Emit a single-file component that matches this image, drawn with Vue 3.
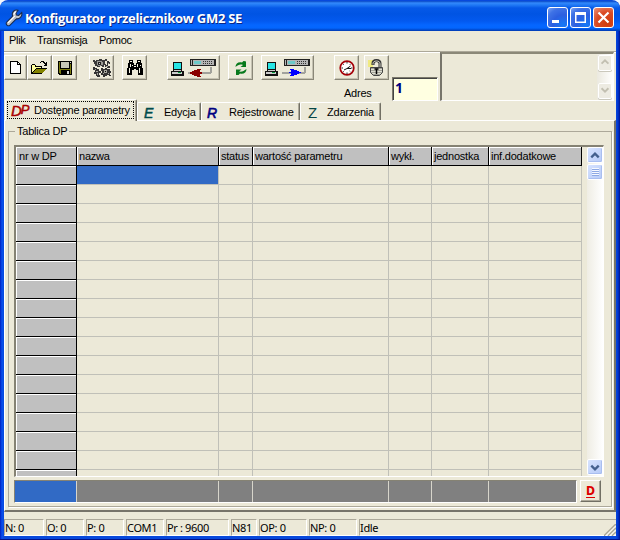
<script setup>
const menus = [
  { t: 'Plik', w: 28 },
  { t: 'Transmisja', w: 62 },
  { t: 'Pomoc', w: 50 }
]
const columns = [
  { t: 'nr w DP', k: 'c0' },
  { t: 'nazwa', k: 'c1' },
  { t: 'status', k: 'c2' },
  { t: 'wartość parametru', k: 'c3' },
  { t: 'wykł.', k: 'c4' },
  { t: 'jednostka', k: 'c5' },
  { t: 'inf.dodatkowe', k: 'c6' }
]
const rows = 17
const status = [
  { t: 'N: 0', w: 40 },
  { t: 'O: 0', w: 38 },
  { t: 'P: 0', w: 38 },
  { t: 'COM1', w: 38 },
  { t: 'Pr : 9600', w: 63 },
  { t: 'N81', w: 26 },
  { t: 'OP: 0', w: 48 },
  { t: 'NP: 0', w: 48 }
]
</script>

<template>
  <div class="window">
    <header class="titlebar">
      <svg class="wrench" width="18" height="18" viewBox="0 0 18 18">
        <path d="M3.500 14.500 10 8" stroke="#14284f" stroke-width="5.400" stroke-linecap="round" />
        <path d="M13 1.200c-3.500-1-6.500 2-5.500 5.300 1 3.500 5.500 4.500 8 1.800 1.300-1.300 1.700-3 1.200-4.800l-3 3-2.300-.4-.4-2.300z" fill="#c3c6cc" stroke="#1c2c49" stroke-width="1.100" />
        <path d="M3.500 14.500 10 8" stroke="#b4b8c0" stroke-width="3.400" stroke-linecap="round" />
        <path d="M3 13.800 10 6.800M9 5.500c.2-1.500 1-2.500 2.300-3" stroke="#fff" stroke-width="1.200" />
      </svg>
      <h1>Konfigurator przelicznikow GM2 SE</h1>
      <div class="controls">
        <button class="ctl"><svg viewBox="0 0 21 21"><path d="M5 13h7v3H5z" fill="#fff" /></svg></button>
        <button class="ctl"><svg viewBox="0 0 21 21"><path d="M5 5h11v11H5zM6.500 8v6.500h8V8z" fill="#fff" fill-rule="evenodd" /></svg></button>
        <button class="ctl close"><svg viewBox="0 0 21 21"><path d="m5.500 5.500 10 10m0-10-10 10" stroke="#fff" stroke-width="2.200" /></svg></button>
      </div>
    </header>

    <div class="client">
      <nav class="menu">
        <span v-for="m in menus" :key="m.t" :style="{ width: m.w + 'px' }">{{ m.t }}</span>
      </nav>

      <section class="toolbar">
        <div class="buttons">
          <button class="tool t-new">
            <svg width="11" height="13" viewBox="0 0 11 13" shape-rendering="crispEdges">
              <path d="M0 0h8v1h1v1h1v1h1v10H0z" fill="#000" /><path d="M1 1h6v3h3v8H1zM8 2h1v1H8z" fill="#fff" />
            </svg>
          </button>
          <button class="tool">
            <svg width="17" height="14" viewBox="0 0 17 14" shape-rendering="crispEdges">
              <path d="M1 4h4l1 1h5v3H5l-4 5z" fill="#ffff9c" />
              <path d="M1 3h3v1h1v1h6v3h-1V6H4V4H1v8H0V4h1zM5 7h11v1h-1v1h-1v1h-1v1h-1v1h-1v1H0v-1h1v-1h1v-1h1V9h1V8h1z" fill="#000" />
              <path d="M5 8h10l-4 4H2z" fill="#848400" />
              <path d="M9 1h1V0h3v1h1v1h1V1h1v4h-3V4h1V3h-1V2h-1V1h-2v1H9z" fill="#000" />
            </svg>
          </button>
          <button class="tool">
            <svg width="14" height="14" viewBox="0 0 14 14" shape-rendering="crispEdges">
              <path d="M0 0h14v14H1l-1-1z" fill="#000" /><path d="M1 1h1v7h10V3h1v10h-1V9H3v4H2l-1-1z" fill="#7b7b10" />
              <path d="M3 1h8v6H3z" fill="#c6c6b8" /><path d="M12 1h1v1h-1zM9 10h2v3H9z" fill="#ddd" />
            </svg>
          </button>
          <button class="tool t-gears">
            <svg width="18" height="18" viewBox="0 0 18 18" shape-rendering="crispEdges">
              <path d="M0 1h2v1h1V1h3V0h3v1h3V0h2v2h-2v3h1v1h-2v2H9V7H7v1H4V7H2V5H1V3H0z" fill="#3a3a3a" /><path d="M4 2h5v1h1v3H8v1H5V6H4z" fill="#9a9a94" /><path d="M5 3h3v3H5z" fill="#222" /><path d="M6 4h1v1H6z" fill="#ccc" />
              <path d="M14 2h2v1h1v2h-2v2h2v2h-3V8h-2V6h2zM0 8h2v1h2v1h2v2h2v2H6v2h1v2H4v-1H3v-2H1v-2h1v-2H0zM8 9h2v1h2V9h2v1h3v2h1v2h-1v2h-3v1h-2v1h-2v-2H8v-2h1v-2H8zM16 16h2v1h-2z" fill="#333" />
              <path d="M11 11h3v3h-3zM2 10h1v1H2zM3 12h2v1H3zM4 14h1v2H4zM15 4h1v1h-1zM13 7h2v1h-2zM10 14h1v1h-1zM15 14h1v1h-1z" fill="#a6a69e" /><path d="M12 12h1v1h-1z" fill="#000" />
            </svg>
          </button>
          <button class="tool t-find">
            <svg width="16" height="16" viewBox="0 0 16 16" shape-rendering="crispEdges">
              <path d="M2 0h4v3h1v2h2V3h1V0h4v3h1v5h1v7h-5v-5H9V9H7v1H5v5H0V8h1V3h1z" fill="#000" />
              <path d="M3 1h2v1H3zM11 1h2v1h-2zM3 4h1v3H3zM10 4h1v3h-1zM2 8h1v5H2zM12 8h1v5h-1zM7 6h2v1H7zM5 5h1v1H5zM13 5h1v1h-1z" fill="#f4f2e4" />
            </svg>
          </button>
          <button class="tool wide t-read">
            <svg width="45" height="18" viewBox="0 0 45 18" shape-rendering="crispEdges">
              <path d="M2 3h9v9H2zM0 12h13v5H0z" fill="#111" /><path d="M3 4h7v6H3z" fill="#27e5e5" /><path d="M3 11h7v1H3zM1 13h10v2H1z" fill="#ccc" /><path d="M7 13h3v1H7z" fill="#009c3a" />
              <path d="M19 0h26v7H19z" fill="#222" /><path d="M20 1h1v5h-1zM22 1h21v5H22zM44 1h0v5h0z" fill="#b4b4b4" /><path d="M23 2h7v3h-7z" fill="#6cc9c9" /><path d="M32 2h1v1h-1zM34 2h1v1h-1zM36 2h1v1h-1zM38 2h1v1h-1zM40 2h1v1h-1zM32 4h1v1h-1zM34 4h1v1h-1zM36 4h1v1h-1zM38 4h1v1h-1zM40 4h1v1h-1z" fill="#333" />
              <path d="M17 13h22V8h2v6h-1v1H17z" fill="#a2a29c" /><path d="M19 13h2v-1h2v-1h3v-1h4v1h-1v2h2v2h-2v2h1v1h-4v-1h-3v-1h-2v-1h-2z" fill="#8b0000" />
            </svg>
          </button>
          <button class="tool t-refresh">
            <svg width="12" height="14" viewBox="0 0 12 14">
              <path d="M.5 6C.5 2.500 3.500.5 7 1.500L8.500 0h.5l2 .5v5.500H5.500L8 4C5 3 3 4 .5 6zM11.500 8c0 3.500-3 5.500-6.500 4.500L3.500 14H1V8.500h5.500L4 10.500c3 .5 5-.5 7.500-2.500z" fill="#08791c" />
            </svg>
          </button>
          <button class="tool wide t-send">
            <svg width="45" height="18" viewBox="0 0 45 18" shape-rendering="crispEdges">
              <path d="M2 3h9v9H2zM0 12h13v5H0z" fill="#111" /><path d="M3 4h7v6H3z" fill="#27e5e5" /><path d="M3 11h7v1H3zM1 13h10v2H1z" fill="#ccc" /><path d="M7 13h3v1H7z" fill="#009c3a" />
              <path d="M19 0h26v7H19z" fill="#222" /><path d="M20 1h1v5h-1zM22 1h21v5H22z" fill="#b4b4b4" /><path d="M23 2h7v3h-7z" fill="#6cc9c9" /><path d="M32 2h1v1h-1zM34 2h1v1h-1zM36 2h1v1h-1zM38 2h1v1h-1zM40 2h1v1h-1zM32 4h1v1h-1zM34 4h1v1h-1zM36 4h1v1h-1zM38 4h1v1h-1zM40 4h1v1h-1z" fill="#333" />
              <path d="M17 13h22V8h2v6h-1v1H17z" fill="#a2a29c" /><path d="M25 10h4v1h3v1h2v1h2v1h-2v1h-2v1h-3v1h-4v-1h1v-2h-2v-1h2v-2h-1z" fill="#0000ff" />
            </svg>
          </button>
          <button class="tool t-clock">
            <svg width="16" height="16" viewBox="0 0 16 16">
              <circle cx="8" cy="8" r="6.800" fill="#fff" stroke="#a40008" stroke-width="1.700" />
              <path d="M8 2v1.500M8 12.500V14M2.500 8H4M12 8h1.500M4.300 4.300l.7.700M11.300 4.300l-.7.700M4.300 11.700l.7-.7M11.300 11.700l-.7-.7" stroke="#222" /><path d="M5 10 8 8.500l3.500-2.500M8 8.500h4" fill="none" stroke="#111" stroke-width="1" />
            </svg>
          </button>
          <button class="tool t-lock">
            <svg width="17" height="17" viewBox="0 0 17 17">
              <path d="M0 1h5v7H0z" fill="#f0ea80" />
              <path d="M5 6V4.500c0-4 7-4 7 0V9" stroke="#333" stroke-width="3" /><path d="M5 5.500v-1c0-3.300 7-3.300 7 0V9" stroke="#d5d5c8" />
              <path d="M2.500 8.500h12v5l-3 3h-6l-3-3z" fill="#a2a298" stroke="#444" /><path d="M3 10.500h11M3 12.500h11M4 14.500h9" stroke="#deded2" /><path d="M6.500 10h4M8.500 10v5" stroke="#000" stroke-width="1.500" />
            </svg>
          </button>
        </div>
        <label class="adres">Adres</label>
        <div class="address">1</div>
        <div class="memo">
          <div class="mbar">
            <i><svg viewBox="0 0 14 15"><path d="m3 9 4-4 4 4" /></svg></i>
            <i><svg viewBox="0 0 14 15"><path d="m3 5 4 4 4-4" /></svg></i>
          </div>
        </div>
      </section>

      <div class="tabs">
        <div class="tab active"><div class="focus"><b class="dp">D<em>P</em></b><span class="l1">Dostępne parametry</span></div></div>
        <div class="tab t2"><b class="e">E</b><span>Edycja</span></div>
        <div class="tab t3"><b class="r">R</b><span>Rejestrowane</span></div>
        <div class="tab t4"><b class="z">Z</b><span>Zdarzenia</span></div>
      </div>

      <main class="page">
        <fieldset>
          <legend>Tablica DP</legend>
          <div class="grid">
            <div class="cells">
              <div class="row head"><div v-for="c in columns" :key="c.k" :class="c.k"><span>{{ c.t }}</span></div></div>
              <div v-for="r in rows" :key="r" class="row">
                <div v-for="(c, i) in columns" :key="c.k" :class="[c.k, { fixed: i === 0, picked: r === 1 && i === 1 }]"></div>
              </div>
            </div>
            <div class="scroll">
              <i class="sb"><svg viewBox="0 0 15 16"><path d="m3.500 10 4-4 4 4" /></svg></i>
              <i class="thumb"></i>
              <i class="sb down"><svg viewBox="0 0 15 16"><path d="m3.500 6 4 4 4-4" /></svg></i>
            </div>
          </div>
          <div class="footer">
            <div class="summary"><div v-for="c in columns" :key="c.k" :class="c.k"></div></div>
            <button class="dbtn">D</button>
          </div>
        </fieldset>
      </main>

      <footer class="statusbar">
        <div v-for="s in status" :key="s.t" class="panel" :style="{ width: s.w + 'px' }">{{ s.t }}</div>
        <div class="panel last">Idle
          <svg class="grip" width="12" height="12" viewBox="0 0 12 12"><path d="M0 12 12 0M4 12l8-8M8 12l4-4" stroke="#aaa797" stroke-width="1.600" /><path d="M1.500 12 12 1.500M5.500 12 12 5.500M9.500 12 12 9.500" stroke="#fff" /></svg>
        </div>
      </footer>
    </div>
  </div>
</template>

<style>
body { margin: 0; background: #f4f8fd; overflow: hidden; }
</style>

<style scoped>
* { box-sizing: border-box; }
button { padding: 0; border: 0; font: inherit; display: block; }
svg { display: block; fill: none; }
.window { width: 620px; height: 540px; padding: 1px 4px 4px; background: linear-gradient(90deg, #001ec0, #0a50ee 2px, #0849dc 4px, #0849dc 616px, #0034cf 618px, #00138c); border-bottom: 1px solid #00138c; border-radius: 8px 8px 0 0; font: 11px/13px "Liberation Sans", Arial, sans-serif; letter-spacing: -.22px; color: #000; white-space: nowrap; }
.titlebar { height: 30px; margin: 0 -4px; padding: 0 6px 0 5px; display: flex; align-items: center; border-radius: 7px 7px 0 0; background: linear-gradient(#0847c5 0, #3389fb 2px, #2079f5 4px, #0659e8 7px, #0054e3 13px, #0359ef 20px, #0566ff 24px, #0366fe 27px, #0048cb 29px, #0038b0); }
h1 { margin: 3px 0 0 2px; flex: 1; font: bold 13px/18px "Open Sans", "Noto Sans", sans-serif; color: #fff; text-shadow: 1px 1px #0a2785; letter-spacing: -.27px; }
.wrench { margin-top: 3px; }
.controls { display: flex; gap: 2px; padding-top: 3px; }
.ctl { width: 21px; height: 21px; border: 1px solid #fff; border-radius: 3px; background: radial-gradient(circle at 80% 90%, #1479f7, #2c5fe0 45%, #3f73e6 75%, #7da4f4); }
.ctl svg { margin: -1px; width: 21px; height: 21px; }
.close { background: radial-gradient(circle at 70% 80%, #cf3b0c, #da4b25 55%, #eb937a); }
.client { height: 505px; background: #ece9d8; display: flex; flex-direction: column; }
.menu { height: 20px; padding: 3px 0 0 5px; display: flex; letter-spacing: -.3px; }
.toolbar { height: 49px; border-top: 1px solid #aca899; display: flex; box-shadow: inset 0 1px #fff; }
.buttons { display: flex; padding-top: 3px; width: 340px; }
.tool { width: 25px; height: 25px; flex: none; display: flex; align-items: center; justify-content: center; background: #ece9d8; border: 1px solid; border-color: #fff #8a8778 #8a8778 #fff; box-shadow: inset -1px -1px #c5c2b2; }
.t-new { width: 23px; }
.wide { width: 53px; }
.t-gears { margin-left: 12px; }
.t-find, .t-refresh, .t-send { margin-left: 8px; }
.t-read, .t-clock { margin-left: 20px; }
.t-lock { margin-left: 5px; }
.adres { width: 28px; margin: 35px 20px 0 0; position: relative; z-index: 1; }
.address { width: 46px; height: 24px; margin-top: 25px; padding: 2px; background: #ffffe1; border: 1px solid; border-color: #7c796b #fff #fff #7c796b; box-shadow: inset 1px 1px #444; font: bold 14px/16px "Open Sans", sans-serif; color: #000080; }
.memo { width: 174px; height: 49px; margin-left: 2px; border: 2px solid; border-color: #8b8878 #fff #fff #77756a; border-bottom-width: 1px; border-right-width: 1px; display: flex; justify-content: flex-end; }
.mbar { width: 16px; display: flex; flex-direction: column; justify-content: space-between; background: linear-gradient(90deg, #ebe9df, #fff); }
.mbar i { height: 16px; margin: 1px; border: 1px solid #fff; border-radius: 2px; background: #edebe2; box-shadow: 0 1px #cac8bc; }
.mbar path { stroke: #c2bfb1; stroke-width: 2.200; }

.tabs { height: 20px; display: flex; align-items: flex-end; }
.tab { height: 18px; display: flex; align-items: center; padding-top: 2px; border-top: 1px solid #fff; border-left: 1px solid #fff; border-right: 1px solid #716f64; box-shadow: inset -1px 0 #aca899; border-radius: 2px 2px 0 0; }
.active { width: 132px; height: 22px; margin: 0 0 -1px 1px; padding: 1px; align-items: flex-start; background: #ece9d8; position: relative; z-index: 2; }
.focus { width: 127px; height: 18px; border: 1px dotted #000; display: flex; align-items: center; padding-left: 3px; }
.tab b { font: italic bold 14px/16px "Liberation Sans", sans-serif; }
.tab .dp { color: #a80000; width: 23px; font-weight: normal; font-size: 15px; -webkit-text-stroke: .5px #a80000; letter-spacing: -1px; }
.dp em { font-size: 13px; vertical-align: 2px; }
.tab .e { width: 20px; color: #004b4b; font-weight: normal; -webkit-text-stroke: .5px #004b4b; }
.tab .r { width: 22px; color: #000080; font-weight: normal; -webkit-text-stroke: .6px #000080; }
.tab .z { width: 19px; color: #064545; font-weight: normal; font-style: normal; font-size: 15px; }
.t2 { width: 64px; padding-left: 6px; }
.t3 { width: 99px; padding-left: 5px; }
.t4 { width: 81px; padding-left: 7px; }
.page { height: 392px; border: solid; border-width: 1px 2px 2px 1px; border-color: #fff #77746a #77746a #fff; padding: 4px 2px 0 3px; }
fieldset { min-width: 0; margin: 0; height: 382px; padding: 0 0 0 5px; border: 1px solid #aca899; box-shadow: 1px 1px #fff; }
legend { height: 13px; margin-left: 1px; padding: 0 2px; }
.grid { width: 590px; height: 332px; margin-top: 7px; border: solid; border-width: 2px 1px 1px 2px; border-color: #858273 #fff #fff #858273; display: flex; justify-content: space-between; }
.cells { height: 329px; overflow: hidden; }
.row { height: 19px; display: flex; }
.row > div { height: 19px; border-right: 1px solid #c0c0b8; border-bottom: 1px solid #c0c0b8; }
.head > div, .row > .fixed { background: #c0c0c0; border-color: #000; box-shadow: inset 1px 1px #fff; }
.head > div { padding: 3px 0 0 2px; }
.head > .c0 { padding-left: 3px; }
.row > .picked { background: #316ac5; }
.c0 { width: 61px; } .c1 { width: 142px; } .c2 { width: 34px; } .c3 { width: 136px; } .c4 { width: 43px; } .c5 { width: 57px; } .c6 { width: 93px; }
.scroll { width: 16px; display: flex; flex-direction: column; background: linear-gradient(90deg, #efede4, #fff); }
.sb, .thumb { height: 16px; border: 1px solid #fff; border-radius: 2px; background: linear-gradient(135deg, #d7e3ff, #b6caf7); box-shadow: inset -1px -1px #a9bef0; margin-bottom: 1px; flex: none; }
.sb path { stroke: #44608e; stroke-width: 2.500; }
.thumb { display: flex; align-items: center; justify-content: center; }
.thumb::before { content: ""; width: 7px; height: 8px; background: repeating-linear-gradient(#f7f9ff 0 1px, #8ea9e4 1px 2px); }
.down { margin-top: auto; }
.footer { margin-top: 3px; display: flex; gap: 3px; }
.summary { width: 563px; height: 23px; display: flex; overflow: hidden; background: #808080; border: 1px solid; border-color: #858273 #fff #fff #858273; }
.summary > div { flex: none; border-right: 1px solid #d7d5cb; }
.summary .c0 { background: #316ac5; width: 62px; }
.summary .c6 { border: 0; }
.dbtn { width: 21px; height: 22px; border: 1px solid; border-color: #fff #716f64 #716f64 #fff; box-shadow: inset -1px -1px #aca899; background: #ece9d8; color: #d00; font: bold 12px/14px "DejaVu Sans Condensed", sans-serif; text-decoration: underline; text-underline-offset: 2px; }
.statusbar { height: 24px; padding-top: 7px; display: flex; gap: 2px; font: 11px/14px "Noto Sans", sans-serif; letter-spacing: -.35px; }
.panel { height: 17px; flex: none; padding: 1px 0 0; border: 1px solid; border-color: #aca899 #fff #fff #aca899; }
.last { flex: 1; display: flex; justify-content: space-between; align-items: flex-end; border-right: 0; }
.grip { margin-bottom: -1px; }
</style>
